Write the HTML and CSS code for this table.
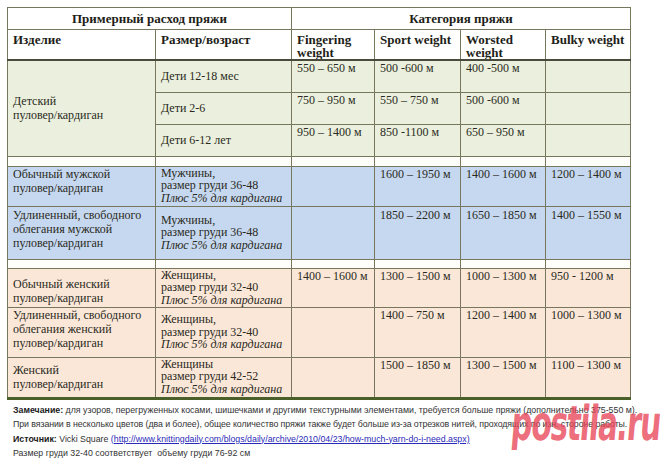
FILE: index.html
```html
<!DOCTYPE html>
<html lang="ru">
<head>
<meta charset="utf-8">
<link rel="stylesheet" href="styles.css">
</head>
<body>
<div class="page">
<table class="yarn">
  <colgroup>
    <col class="c1"><col class="c2"><col class="c3"><col class="c4"><col class="c5"><col class="c6">
  </colgroup>
  <tr class="h1">
    <th colspan="2">Примерный расход пряжи</th>
    <th colspan="4">Категория пряжи</th>
  </tr>
  <tr class="h2">
    <th>Изделие</th>
    <th>Размер/возраст</th>
    <th>Fingering weight</th>
    <th>Sport weight</th>
    <th>Worsted weight</th>
    <th>Bulky weight</th>
  </tr>
  <tr class="green r32">
    <td rowspan="3" class="mid">Детский<br>пуловер/кардиган</td>
    <td class="mid">Дети 12-18 мес</td>
    <td>550 – 650 м</td>
    <td>500 -600 м</td>
    <td>400 -500 м</td>
    <td></td>
  </tr>
  <tr class="green r32">
    <td class="mid">Дети 2-6</td>
    <td>750 – 950 м</td>
    <td>550 – 750 м</td>
    <td>500 -600 м</td>
    <td></td>
  </tr>
  <tr class="green r32">
    <td class="mid">Дети 6-12 лет</td>
    <td>950 – 1400 м</td>
    <td>850 -1100 м</td>
    <td>650 – 950 м</td>
    <td></td>
  </tr>
  <tr class="spacer s9"><td></td><td></td><td></td><td></td><td></td><td></td></tr>
  <tr class="blue m1">
    <td>Обычный мужской<br>пуловер/кардиган</td>
    <td class="tight">Мужчины,<br>размер груди 36-48<br><i>Плюс 5% для кардигана</i></td>
    <td></td>
    <td>1600 – 1950 м</td>
    <td>1400 – 1600 м</td>
    <td>1200 – 1400 м</td>
  </tr>
  <tr class="blue m2">
    <td>Удлиненный, свободного облегания мужской пуловер/кардиган</td>
    <td class="mid tight">Мужчины,<br>размер груди 36-48<br><i>Плюс 5% для кардигана</i></td>
    <td></td>
    <td>1850 – 2200 м</td>
    <td>1650 – 1850 м</td>
    <td>1400 – 1550 м</td>
  </tr>
  <tr class="spacer s8"><td></td><td></td><td></td><td></td><td></td><td></td></tr>
  <tr class="peach w1">
    <td class="mid low">Обычный женский<br>пуловер/кардиган</td>
    <td class="tight">Женщины,<br>размер груди 32-40<br><i>Плюс 5% для кардигана</i></td>
    <td>1400 – 1600 м</td>
    <td>1300 – 1500 м</td>
    <td>1000 – 1300 м</td>
    <td>950 - 1200 м</td>
  </tr>
  <tr class="peach w2">
    <td>Удлиненный, свободного облегания женский пуловер/кардиган</td>
    <td class="mid tight">Женщины,<br>размер груди 32-40<br><i>Плюс 5% для кардигана</i></td>
    <td></td>
    <td>1400 – 750 м</td>
    <td>1200 – 1400 м</td>
    <td>1000 – 1300 м</td>
  </tr>
  <tr class="peach w3 last">
    <td class="mid">Женский<br>пуловер/кардиган</td>
    <td class="tight">Женщины<br>размер груди 42-52<br><i>Плюс 5% для кардигана</i></td>
    <td></td>
    <td>1500 – 1850 м</td>
    <td>1300 – 1500 м</td>
    <td>1100 – 1300 м</td>
  </tr>
</table>
<div class="notes">
  <p><b>Замечание:</b> для узоров, перегруженных косами, шишечками и другими текстурными элементами, требуется больше пряжи (дополнительно 375-550 м).</p>
  <p class="narrow">При вязании в несколько цветов (два и более), общее количество пряжи также будет больше из-за отрезков нитей, проходящих по изн. стороне работы.</p>
  <p><b>Источник:</b> Vicki Square <a href="#">(http://www.knittingdaily.com/blogs/daily/archive/2010/04/23/how-much-yarn-do-i-need.aspx)</a></p>
  <p>Размер груди 32-40 соответствует&nbsp; объему груди 76-92 см</p>
</div>
<div class="watermark">postila.ru</div>
</div>
</body>
</html>
```

FILE: styles.css
```css
html, body {
  margin: 0;
  padding: 0;
  background: #ffffff;
}
.page {
  position: relative;
  width: 660px;
  height: 461px;
  overflow: hidden;
  padding: 7px 0 0 7px;
  box-sizing: border-box;
}
.yarn {
  border-collapse: collapse;
  table-layout: fixed;
  width: 623px;
  font-family: "Liberation Serif", "DejaVu Serif", serif;
  font-size: 12px;
  line-height: 14px;
  color: #2a2a22;
}
.c1 { width: 148px; }
.c2 { width: 136px; }
.c3 { width: 83px; }
.c4 { width: 86px; }
.c5 { width: 85px; }
.c6 { width: 85px; }
.yarn th, .yarn td {
  border: 1px solid #77775e;
  padding: 0 5px;
  text-align: left;
  vertical-align: top;
  overflow: hidden;
}
.yarn th {
  font-weight: bold;
  font-size: 13px;
  line-height: 13px;
  color: #1e1e18;
  background: #ffffff;
}
.h1 th {
  height: 21px;
  text-align: center;
  vertical-align: middle;
}
.h2 th {
  height: 30px;
  padding-top: 3px;
  border-bottom: 2px solid #4a4a3a;
  box-sizing: border-box;
}
.green td { background: #eaf0dd; }
.blue td { background: #c6d8f0; }
.peach td { background: #fbe7d8; }
.spacer td { background: #fdfdf9; padding: 0; }
.r32 td { height: 32px; padding-top: 0; box-sizing: border-box; }
.s9 td { height: 9px; }
.s8 td { height: 8px; }
.m1 td { height: 40px; box-sizing: border-box; }
.m2 td { height: 53px; padding-top: 1px; box-sizing: border-box; }
.w1 td { height: 39px; box-sizing: border-box; }
.w2 td { height: 50px; box-sizing: border-box; }
.w3 td { height: 41px; box-sizing: border-box; }
.yarn td.tight { line-height: 12.6px; padding-top: 0; }
.yarn td.mid { vertical-align: middle; padding-top: 0; }
.yarn td.low { vertical-align: bottom; padding-bottom: 2px; }
.last td { border-bottom: 3px solid #4b5f2b; }
.yarn i {
  font-style: italic;
}
.notes {
  margin-top: 3px;
  padding-left: 6px;
  font-family: "Liberation Sans", Arial, sans-serif;
  font-size: 8.8px;
  line-height: 14.5px;
  color: #333333;
}
.notes p {
  margin: 0;
  white-space: nowrap;
}
.notes p.narrow {
  letter-spacing: -0.08px;
}
.notes b {
  color: #1a1a1a;
}
.notes a {
  color: #2a2ab8;
  text-decoration: underline;
}
.watermark {
  position: absolute;
  left: 514px;
  top: 395px;
  font-family: "DejaVu Sans", "Liberation Sans", sans-serif;
  font-weight: bold;
  font-size: 48px;
  line-height: 56px;
  letter-spacing: -2px;
  color: rgba(232, 70, 88, 0.78);
  transform-origin: left top;
  transform: scaleX(0.62) skewX(-8deg);
  white-space: nowrap;
}
```
